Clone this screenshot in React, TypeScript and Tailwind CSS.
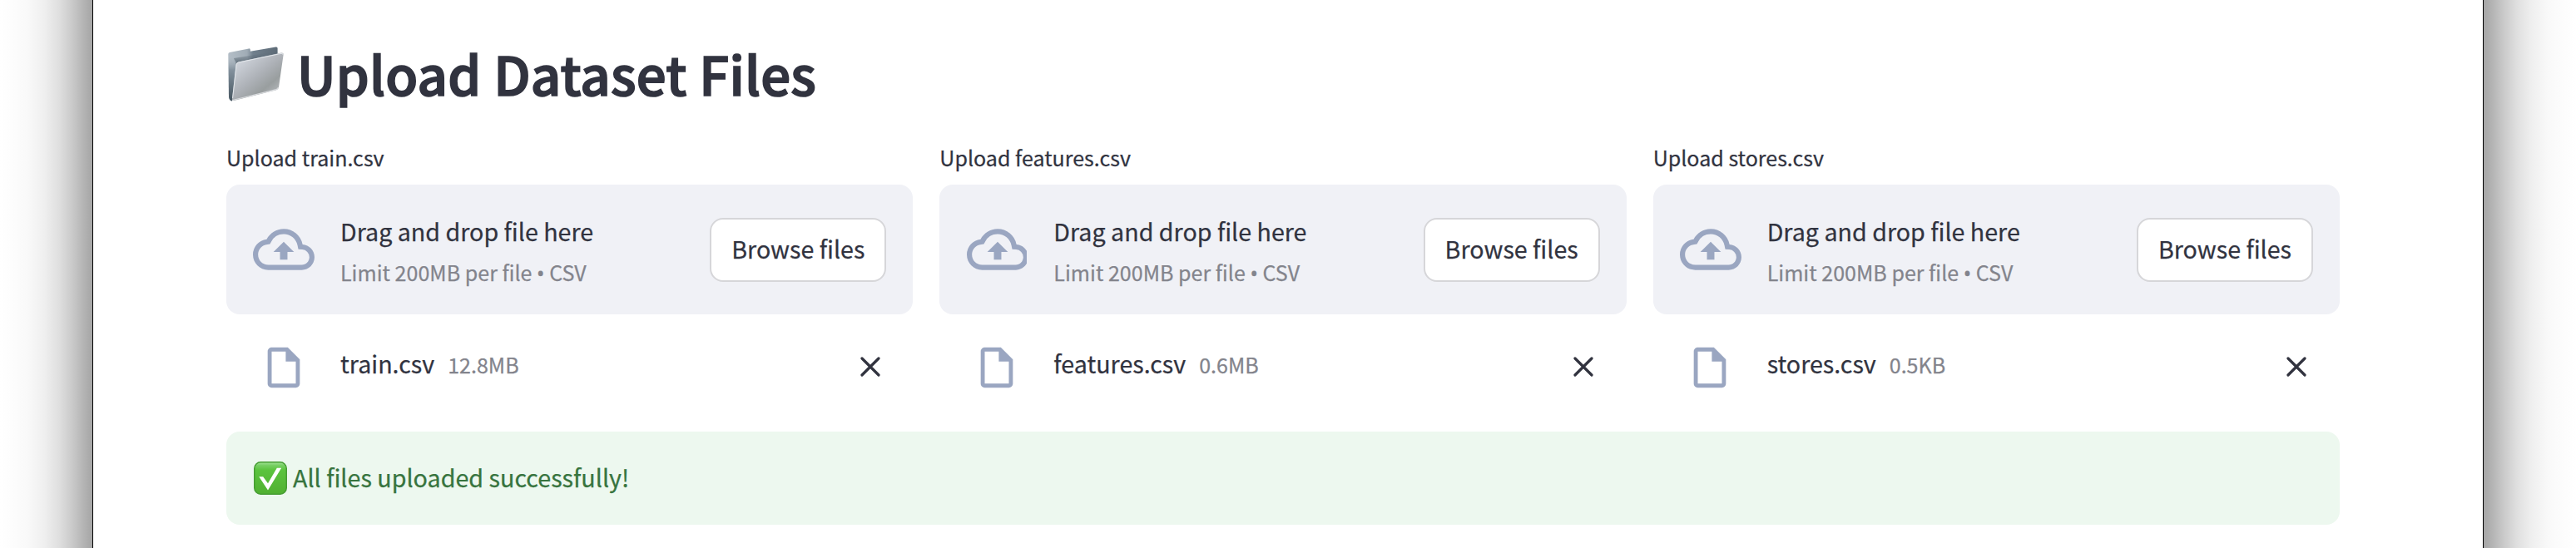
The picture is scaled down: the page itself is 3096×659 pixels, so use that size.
import React from "react";

type Upload = { name: string; size: string; clipped?: boolean };

const uploads: Upload[] = [
  { name: "train.csv", size: "12.8MB" },
  { name: "features.csv", size: "0.6MB", clipped: true },
  { name: "stores.csv", size: "0.5KB" },
];

function FolderIcon() {
  return (
    <svg width="68" height="67" viewBox="0 0 68 67" className="shrink-0">
      <defs>
        <linearGradient id="folderBack" x1="0" y1="0" x2="1" y2="0">
          <stop offset="0" stopColor="#b4bec7" />
          <stop offset="0.38" stopColor="#a0acb6" />
          <stop offset="0.5" stopColor="#71808d" />
          <stop offset="1" stopColor="#5d6b77" />
        </linearGradient>
        <linearGradient id="folderSide" x1="0" y1="0" x2="0" y2="1">
          <stop offset="0" stopColor="#a9b4bd" stopOpacity="0" />
          <stop offset="0.3" stopColor="#83919d" />
          <stop offset="1" stopColor="#465560" />
        </linearGradient>
        <linearGradient id="folderShade" x1="0" y1="0" x2="0" y2="1">
          <stop offset="0" stopColor="#5a6874" stopOpacity="0" />
          <stop offset="1" stopColor="#4b5965" />
        </linearGradient>
        <linearGradient id="folderFront" x1="0" y1="0.1" x2="0.8" y2="1">
          <stop offset="0" stopColor="#d9dee6" />
          <stop offset="0.5" stopColor="#aeb2b8" />
          <stop offset="0.75" stopColor="#999e9f" />
          <stop offset="1" stopColor="#b9bcc0" />
        </linearGradient>
      </defs>
      <path d="M0.3 9Q0.3 7.4 2 7L25 2.4Q26.8 2.1 26.8 4V5.8L57.5 0.5Q59.6 0.2 59.6 2V16L12 28L5 65.5Q1 65 1 60Z" fill="url(#folderBack)" />
      <path d="M7 14L56 6L59.6 7V14L11 24Z" fill="url(#folderShade)" />
      <path d="M0.6 12L10 17L10 28L5 65.4Q1.2 65 1 60Z" fill="url(#folderSide)" />
      <path d="M9.6 21.5Q10 19 12.5 18.4L64 7.6Q67 7.2 66.6 10L61 49Q60.6 51.6 58 52.3L7 64.9Q4.6 65.5 5 62.5Z" fill="url(#folderFront)" />
      <path d="M5.6 62L10.2 21.8Q10.5 19.6 12.6 19.1L64 8.3Q66 8 66 9.8" fill="none" stroke="#e3e7eb" strokeWidth="1" />
      <path d="M5.5 64.5L58 51.6Q60 51 60.4 49" fill="none" stroke="#dadcdf" strokeWidth="1.2" />
    </svg>
  );
}

function CloudUploadIcon({ clipped }: { clipped?: boolean }) {
  return (
    <span className={clipped ? "ml-px block w-[72px] shrink-0 overflow-hidden" : "block w-[73px] shrink-0"}>
      <svg width="74" height="74" viewBox="0 0 24 24" fill="#9aa6c1" className="max-w-none">
        <path d="M19.35 10.04A7.49 7.49 0 0 0 12 4C9.11 4 6.6 5.64 5.35 8.04A5.994 5.994 0 0 0 0 14c0 3.31 2.69 6 6 6h13c2.76 0 5-2.24 5-5 0-2.64-2.05-4.78-4.65-4.96zM19 18H6c-2.21 0-4-1.79-4-4 0-2.05 1.53-3.76 3.56-3.97l1.07-.11.5-.95A5.469 5.469 0 0 1 12 6c2.62 0 4.88 1.86 5.39 4.43l.3 1.5 1.53.11A2.98 2.98 0 0 1 22 15c0 1.65-1.35 3-3 3zM8 13h2.55v3h2.9v-3H16l-4-4z" />
      </svg>
    </span>
  );
}

function FileIcon() {
  return (
    <svg width="58" height="58" viewBox="0 0 24 24" fill="#9aa6c1" className="shrink-0">
      <path d="M14 2H6c-1.1 0-1.99.9-1.99 2L4 20c0 1.1.89 2 1.99 2H18c1.1 0 2-.9 2-2V8l-6-6zM6 20V4h7v5h5v11H6z" />
    </svg>
  );
}

function CloseIcon() {
  return (
    <svg width="24" height="24" viewBox="0 0 24 24" className="shrink-0">
      <path d="M2 2L22 22M22 2L2 22" stroke="#31333f" strokeWidth="3.2" strokeLinecap="round" />
    </svg>
  );
}

function CheckEmoji() {
  return (
    <svg width="40" height="40" viewBox="0 0 40 40" className="shrink-0">
      <defs>
        <linearGradient id="checkFill" x1="0" y1="0" x2="0" y2="1">
          <stop offset="0" stopColor="#a5e39a" />
          <stop offset="0.1" stopColor="#77cf64" />
          <stop offset="0.25" stopColor="#5bc33e" />
          <stop offset="1" stopColor="#50b031" />
        </linearGradient>
      </defs>
      <rect x="0.75" y="0.75" width="38.5" height="38.5" rx="7.5" fill="url(#checkFill)" stroke="#469d33" strokeWidth="1.5" />
      <path d="M6.3 18.3H11.2L17 26.3L27.8 7.8H33.2L17 34.4Z" fill="#fff" />
    </svg>
  );
}

function Uploader({ name, size, clipped }: Upload) {
  return (
    <section className="min-w-0 flex-1">
      <div className="h-[52px] text-[25.05px] leading-[38px]">Upload {name}</div>
      <div className="flex h-[156px] items-center rounded-2xl bg-[#f0f1f6] px-8">
        <CloudUploadIcon clipped={clipped} />
        <div className="ml-8 flex-1 pt-[7px]">
          <div className="text-[28.65px] leading-[48px]">Drag and drop file here</div>
          <div className="text-[25.05px] leading-[50px] text-[#83848c]">
            Limit 200MB per file <span className="font-['Noto_Sans',sans-serif]">•</span> CSV
          </div>
        </div>
        <button className="h-[77px] w-[212px] rounded-2xl border-2 border-[#d6d6d9] bg-white pb-[3px] text-[28.65px] leading-[48px]">
          Browse files
        </button>
      </div>
      <div className="flex h-[141px] items-start pl-[39.5px] pr-[39.5px] pt-[35px]">
        <FileIcon />
        <div className="ml-[39.5px] flex flex-1 items-baseline gap-4 pt-px leading-[46px]">
          <span className="text-[28.65px]">{name}</span>
          <span className="text-[25.05px] text-[#83848c]">{size}</span>
        </div>
        <div className="pt-4">
          <CloseIcon />
        </div>
      </div>
    </section>
  );
}

export default function App() {
  return (
    <div className="flex h-[659px] w-full overflow-hidden bg-white font-['Noto_Sans_CJK_SC','Noto_Sans',sans-serif] text-[#31333f] [-webkit-text-stroke-width:0.25px]">
      <div className="w-[111px] shrink-0 bg-[linear-gradient(to_right,#fff_0%,#fdfdfd_12%,#f9f9f9_30%,#efefef_48%,#dfdfdf_64%,#cacaca_78%,#b5b5b5_90%,#a5a5a5_100%)]" />
      <main className="flex-1 border-x border-black pl-40 pr-[172px] pt-[39px]">
        <h1 className="flex h-[131px] items-start pl-[2px] text-[63.5px] font-medium leading-[97px] tracking-[0.25px] [-webkit-text-stroke-width:1.7px]">
          <span className="flex pt-[17px]">
            <FolderIcon />
          </span>
          <span className="ml-[15px]">Upload Dataset Files</span>
        </h1>
        <div className="flex gap-8">
          {uploads.map((u) => (
            <Uploader key={u.name} {...u} />
          ))}
        </div>
        <div className="flex h-28 items-center gap-[7px] rounded-2xl bg-[#edf8ef] pl-[33px] text-[28.7px] text-[#37743e]">
          <CheckEmoji />
          <span className="pb-[2px] leading-[48px]">All files uploaded successfully!</span>
        </div>
      </main>
      <div className="w-[111px] shrink-0 bg-[linear-gradient(to_left,#fff_0%,#fdfdfd_12%,#f9f9f9_30%,#efefef_48%,#dfdfdf_64%,#cacaca_78%,#b5b5b5_90%,#a5a5a5_100%)]" />
    </div>
  );
}
